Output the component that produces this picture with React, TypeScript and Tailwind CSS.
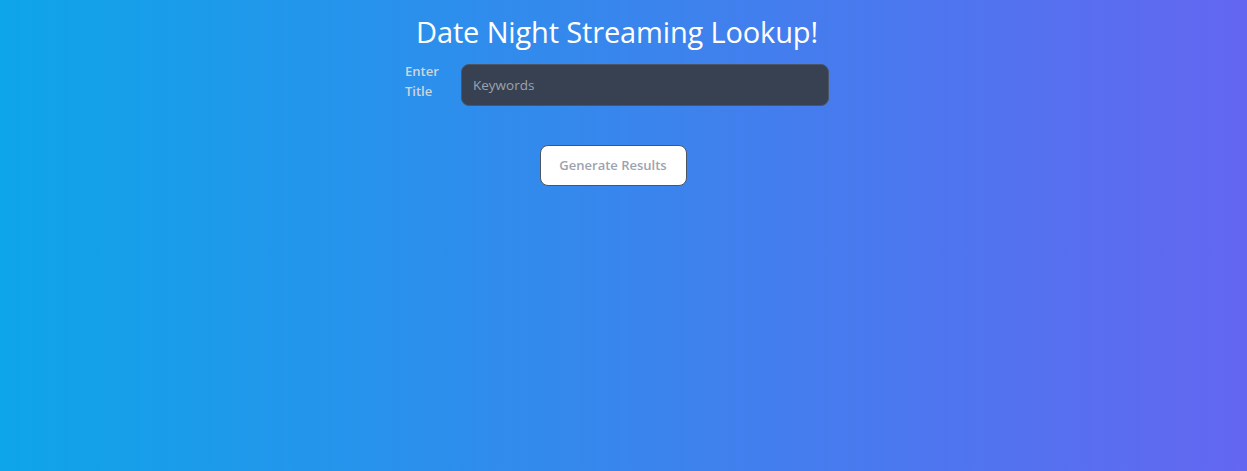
import React from "react";

export default function App() {
  return (
    <div
      className="min-h-[471px] w-full bg-[linear-gradient(to_right,#0ea5e9,#6366f1)] flex flex-col items-center pr-[13px]"
      style={{ fontFamily: '"Open Sans", "Noto Sans", sans-serif' }}
    >
      <h1 className="mt-[12px] text-[29px] leading-[40px] text-white tracking-[-0.15px]">
        Date Night Streaming Lookup!
      </h1>
      <div className="mt-[12px] flex items-start">
        <label className="w-[40px] mr-[16px] text-[13px] leading-[20px] font-semibold text-[#d1d5db] mt-[-3px]">
          Enter Title
        </label>
        <input
          type="text"
          placeholder="Keywords"
          className="w-[368px] h-[42px] rounded-lg bg-[#374151] border border-[#4b5563] px-[11px] text-[13.5px] text-white placeholder:text-[#9ca3af] outline-none"
        />
      </div>
      <button className="mt-[39px] mr-[8px] w-[147px] h-[41px] rounded-lg bg-white border border-[#4b5563] text-[13px] font-semibold text-[#9ca3af]">
        Generate Results
      </button>
    </div>
  );
}
